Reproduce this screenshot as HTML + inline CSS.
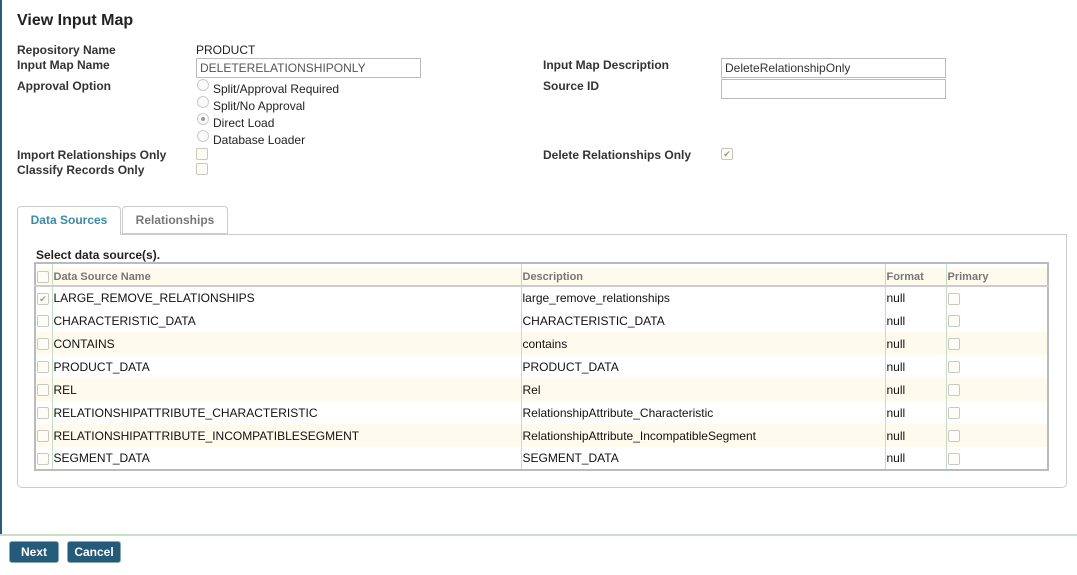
<!DOCTYPE html>
<html><head><style>
*{box-sizing:border-box}
body{margin:0;width:1077px;height:575px;background:#fff;font-family:"Liberation Sans",Arial,sans-serif;font-size:12px;color:#222;position:relative;overflow:hidden}
.a{position:absolute;white-space:nowrap}
.lb{font-weight:bold;color:#333}
.inp{position:absolute;height:20px;border:1px solid #bbb;padding:2px 3px;font-size:12px;color:#555}
.rad{position:absolute;width:12px;height:12px;border:1px solid #ccc;border-radius:50%;background:#fafafa}
.cb{position:absolute;width:12px;height:12px;border:1px solid #c9c9c0;border-radius:2px;background:#fdfcf6}
table{border-collapse:collapse;position:absolute;left:34px;top:262px;width:1015px;border:2px solid #bbb;font-size:12px}
td{height:23px;padding:0 1px;border-right:1px solid #c5dcc5;vertical-align:middle;color:#111}
tr.h td{height:23px;padding-top:5px;font-weight:bold;color:#777;font-size:11px;background:#fffaee;border-bottom:2px solid #ccc;box-shadow:inset 0 4px 0 #fff}
tr.o td{background:#fffaee}
td .c{display:inline-block;width:12px;height:12px;border:1px solid #c9c9c0;border-radius:2px;background:#fdfcf6;vertical-align:middle}
.btn{position:absolute;top:541px;height:22px;background:#245a7a;color:#fff;font-weight:bold;border:1px solid #8aa;border-radius:3px;text-align:center;line-height:20px;font-size:12px}
</style></head><body>
<div class="a" style="left:0;top:0;width:2px;height:535px;background:#2a5c80"></div>
<div class="a lb" style="left:17px;top:12px;font-size:16px;color:#222">View Input Map</div>
<div class="a lb" style="left:17px;top:43px">Repository Name</div>
<div class="a" style="left:196px;top:43px">PRODUCT</div>
<div class="a lb" style="left:17px;top:58px">Input Map Name</div>
<div class="inp" style="left:196px;top:58px;width:225px">DELETERELATIONSHIPONLY</div>
<div class="a lb" style="left:17px;top:79px">Approval Option</div>
<div class="rad" style="left:197px;top:79px"></div><div class="a" style="left:213px;top:82px">Split/Approval Required</div>
<div class="rad" style="left:197px;top:96px"></div><div class="a" style="left:213px;top:99px">Split/No Approval</div>
<div class="rad" style="left:197px;top:113px"><div style="width:4px;height:4px;background:#999;border-radius:50%;margin:3px"></div></div><div class="a" style="left:213px;top:116px">Direct Load</div>
<div class="rad" style="left:197px;top:130px"></div><div class="a" style="left:213px;top:133px">Database Loader</div>
<div class="a lb" style="left:17px;top:148px">Import Relationships Only</div>
<div class="cb" style="left:196px;top:148px"></div>
<div class="a lb" style="left:17px;top:163px">Classify Records Only</div>
<div class="cb" style="left:196px;top:163px"></div>
<div class="a lb" style="left:543px;top:58px">Input Map Description</div>
<div class="inp" style="left:721px;top:58px;width:225px;color:#333">DeleteRelationshipOnly</div>
<div class="a lb" style="left:543px;top:79px">Source ID</div>
<div class="inp" style="left:721px;top:79px;width:225px"></div>
<div class="a lb" style="left:543px;top:148px">Delete Relationships Only</div>
<div class="cb" style="left:721px;top:148px;color:#999;font-size:9px;line-height:10px;text-align:center">✔</div>
<div class="a" style="left:17px;top:234px;width:1050px;height:254px;border:1px solid #ccc;border-radius:0 0 5px 5px"></div>
<div class="a" style="left:17px;top:206px;width:104px;height:29px;border:1px solid #ccc;border-bottom:none;border-radius:4px 4px 0 0;background:#fff;color:#3a8aa8;font-weight:bold;text-align:center;line-height:26px">Data Sources</div>
<div class="a" style="left:122px;top:206px;width:106px;height:28px;border:1px solid #ccc;border-radius:4px 4px 0 0;background:#fff;color:#777;font-weight:bold;text-align:center;line-height:26px">Relationships</div>
<div class="a lb" style="left:36px;top:248px;color:#222">Select data source(s).</div>
<table>
<tr class="h"><td style="width:17px"><span class="c"></span></td><td style="width:469px">Data Source Name</td><td style="width:364px">Description</td><td style="width:61px">Format</td><td>Primary</td></tr>
<tr><td><span class="c" style="color:#999;font-size:9px;line-height:10px;text-align:center">✔</span></td><td>LARGE_REMOVE_RELATIONSHIPS</td><td>large_remove_relationships</td><td>null</td><td><span class="c"></span></td></tr>
<tr><td><span class="c"></span></td><td>CHARACTERISTIC_DATA</td><td>CHARACTERISTIC_DATA</td><td>null</td><td><span class="c"></span></td></tr>
<tr class="o"><td><span class="c"></span></td><td>CONTAINS</td><td>contains</td><td>null</td><td><span class="c"></span></td></tr>
<tr><td><span class="c"></span></td><td>PRODUCT_DATA</td><td>PRODUCT_DATA</td><td>null</td><td><span class="c"></span></td></tr>
<tr class="o"><td><span class="c"></span></td><td>REL</td><td>Rel</td><td>null</td><td><span class="c"></span></td></tr>
<tr><td><span class="c"></span></td><td>RELATIONSHIPATTRIBUTE_CHARACTERISTIC</td><td>RelationshipAttribute_Characteristic</td><td>null</td><td><span class="c"></span></td></tr>
<tr class="o"><td><span class="c"></span></td><td>RELATIONSHIPATTRIBUTE_INCOMPATIBLESEGMENT</td><td>RelationshipAttribute_IncompatibleSegment</td><td>null</td><td><span class="c"></span></td></tr>
<tr><td><span class="c"></span></td><td>SEGMENT_DATA</td><td>SEGMENT_DATA</td><td>null</td><td><span class="c"></span></td></tr>
</table>
<div class="a" style="left:0;top:534px;width:1077px;height:2px;background:#c8e0c8"></div>
<div class="btn" style="left:9px;width:50px">Next</div>
<div class="btn" style="left:67px;width:54px">Cancel</div>
</body></html>
